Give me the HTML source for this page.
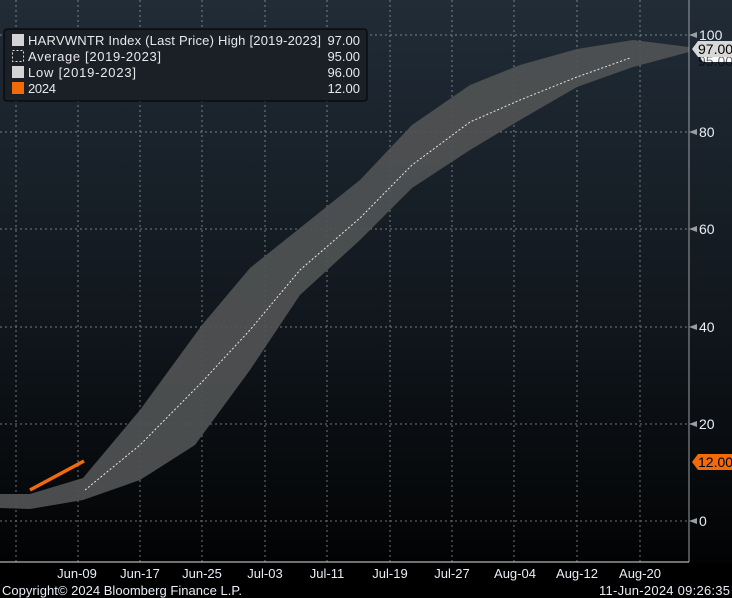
<!DOCTYPE html>
<html><head><style>
body{margin:0;width:732px;height:598px;overflow:hidden;background:#000;}
svg{display:block;font-family:"Liberation Sans",sans-serif;}
</style></head><body>
<svg width="732" height="598" viewBox="0 0 732 598" xmlns="http://www.w3.org/2000/svg">
<defs>
<linearGradient id="bg" x1="0" y1="0" x2="0" y2="1">
<stop offset="0" stop-color="#212c37"/>
<stop offset="0.55" stop-color="#10161c"/>
<stop offset="1" stop-color="#000"/>
</linearGradient>
</defs>
<rect width="732" height="598" fill="url(#bg)"/>
<rect y="562" width="732" height="36" fill="#000"/>
<g stroke="#b8bcc0" stroke-width="1" stroke-dasharray="2,3" opacity="0.6">
<line x1="16" y1="0" x2="16" y2="562"/><line x1="78" y1="0" x2="78" y2="562"/>
<line x1="140" y1="0" x2="140" y2="562"/><line x1="202" y1="0" x2="202" y2="562"/>
<line x1="265" y1="0" x2="265" y2="562"/><line x1="327" y1="0" x2="327" y2="562"/>
<line x1="390" y1="0" x2="390" y2="562"/><line x1="452" y1="0" x2="452" y2="562"/>
<line x1="514" y1="0" x2="514" y2="562"/><line x1="577" y1="0" x2="577" y2="562"/>
<line x1="640" y1="0" x2="640" y2="562"/>
<line x1="0" y1="35" x2="689" y2="35"/><line x1="0" y1="132" x2="689" y2="132"/>
<line x1="0" y1="229" x2="689" y2="229"/><line x1="0" y1="327" x2="689" y2="327"/>
<line x1="0" y1="424" x2="689" y2="424"/><line x1="0" y1="521" x2="689" y2="521"/>
</g>
<polygon fill="#505254" opacity="0.92" points="0,494 30,494 83,478 140,410 202,325 250,268 300,228 360,180 412,125 470,85 520,65 577,49 633,40 689,47 689,52 633,67 577,87 520,120 470,150 412,188 360,240 300,295 250,370 195,445 140,480 83,500 30,509 0,508"/>
<polyline fill="none" stroke="#e8e8e8" stroke-width="1" stroke-dasharray="2,2" points="85,490 140,445 202,382 250,330 300,270 360,218 412,165 470,122 520,100 577,77 630,58"/>
<line x1="30" y1="490" x2="84" y2="461" stroke="#f26a0a" stroke-width="3.5"/>
<line x1="689" y1="0" x2="689" y2="562" stroke="#9a9ea2"/>
<line x1="0" y1="562" x2="689" y2="562" stroke="#e0e0e0"/>
<g fill="#9a9ea2">
<polygon points="689,35 697,32 697,38"/><polygon points="689,132 697,129 697,135"/>
<polygon points="689,229 697,226 697,232"/><polygon points="689,327 697,324 697,330"/>
<polygon points="689,424 697,421 697,427"/><polygon points="689,521 697,518 697,524"/>
</g>
<g fill="#e6eef6" font-size="14">
<text x="699" y="40">100</text><text x="699" y="137">80</text><text x="699" y="234">60</text>
<text x="699" y="332">40</text><text x="699" y="429">20</text><text x="699" y="526">0</text>
</g>
<polygon points="697,52 703,45 732,45 732,62 703,62" fill="#fff"/>
<text x="698" y="66" font-size="14" fill="#000" opacity="0.6">95.00</text>
<polygon points="692,49 698,41 732,41 732,57 698,57" fill="#d8d8d8"/>
<text x="698" y="54" font-size="14" fill="#000">97.00</text>
<polygon points="692,462 698,454 732,454 732,470 698,470" fill="#f26a0a"/>
<text x="698" y="467" font-size="14" fill="#000">12.00</text>
<g fill="#e6eef6" font-size="13" text-anchor="middle">
<text x="77" y="578">Jun-09</text><text x="140" y="578">Jun-17</text><text x="202" y="578">Jun-25</text>
<text x="265" y="578">Jul-03</text><text x="327" y="578">Jul-11</text><text x="390" y="578">Jul-19</text>
<text x="452" y="578">Jul-27</text><text x="515" y="578">Aug-04</text><text x="577" y="578">Aug-12</text>
<text x="640" y="578">Aug-20</text>
</g>
<text x="2" y="595" font-size="13" fill="#e6eef6" textLength="240">Copyright© 2024 Bloomberg Finance L.P.</text>
<text x="599" y="595" font-size="13" fill="#e6eef6" textLength="131">11-Jun-2024 09:26:35</text>
<rect x="4" y="29" width="363" height="72" rx="3" fill="#1b2026" stroke="#000"/>
<g font-size="13" fill="#e8e8e8">
<rect x="12" y="34" width="12" height="12" fill="#d4d4d4"/>
<text x="28" y="45" textLength="293">HARVWNTR Index (Last Price) High [2019-2023]</text>
<rect x="12.5" y="50.5" width="11" height="11" fill="none" stroke="#ddd" stroke-dasharray="2,2"/>
<text x="28" y="61" textLength="133">Average  [2019-2023]</text>
<rect x="12" y="66" width="12" height="12" fill="#d4d4d4"/>
<text x="28" y="77" textLength="108">Low  [2019-2023]</text>
<rect x="12" y="82" width="12" height="12" fill="#f26a0a"/>
<text x="28" y="93" textLength="28">2024</text>
<g text-anchor="end">
<text x="360" y="45">97.00</text><text x="360" y="61">95.00</text>
<text x="360" y="77">96.00</text><text x="360" y="93">12.00</text>
</g>
</g>
</svg>
</body></html>
